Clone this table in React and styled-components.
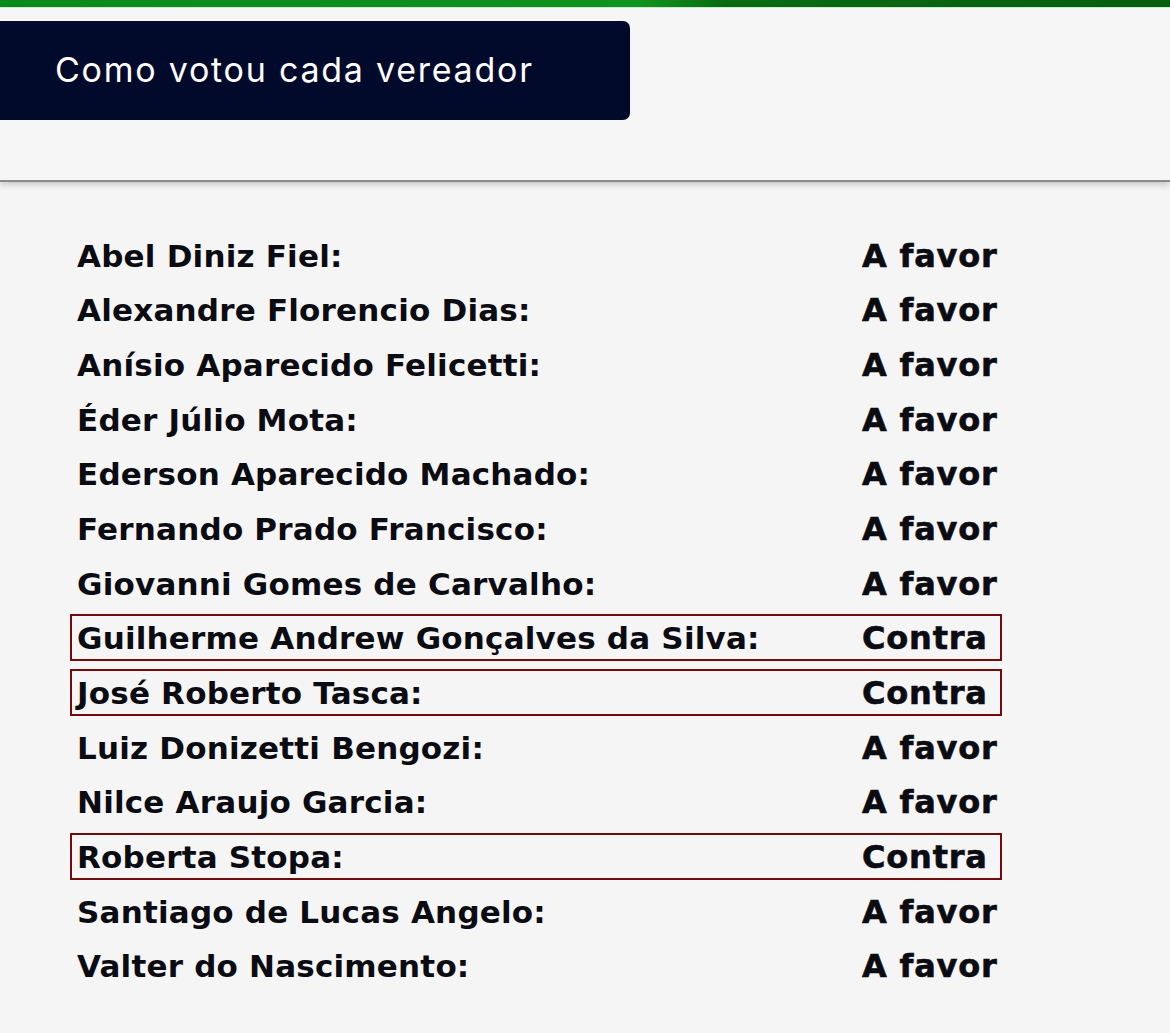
import React from "react";
import styled, { createGlobalStyle } from "styled-components";

const Global = createGlobalStyle`
  html, body { margin: 0; padding: 0; background: #f5f5f5; }
  body { font-family: "Inter", "Liberation Sans", sans-serif; }
`;

const Page = styled.div`
  width: 1170px;
  min-height: 1033px;
  background: #f5f5f5;
  overflow: hidden;
`;

const TopBar = styled.div`
  height: 7px;
  background: linear-gradient(to right, #0b8a1c 0%, #12921f 55%, #0a6a12 62%, #075e10 100%);
  border-bottom: 1px solid #c9f5d2;
`;

const Header = styled.header`
  height: 174px;
  box-sizing: border-box;
  padding-top: 13px;
  background: #f6f6f6;
  border-bottom: 2px solid #8a8a8a;
  box-shadow: 0 3px 6px rgba(0, 0, 0, 0.18);
`;

const TitleBox = styled.div`
  width: 630px;
  height: 99px;
  box-sizing: border-box;
  background: #020a2c;
  border-radius: 0 7px 7px 0;
  display: flex;
  align-items: center;
  padding-left: 55px;
  padding-bottom: 2px;
  color: #ffffff;
  font-family: "Inter", sans-serif;
  font-size: 34px;
  font-weight: 400;
  letter-spacing: 1.75px;
`;

const List = styled.div`
  display: flex;
  flex-direction: column;
  gap: 7.7px;
  padding: 49px 0 0 70px;
`;

const Row = styled.div`
  width: 932px;
  height: 47px;
  box-sizing: border-box;
  display: grid;
  grid-template-columns: 785px auto;
  align-items: center;
  padding-left: 5px;
  border: 2px solid ${(p) => (p.$highlight ? "#720c0c" : "transparent")};
`;

const Name = styled.span`
  font-family: "DejaVu Sans", sans-serif;
  font-weight: 700;
  font-size: 31px;
  letter-spacing: 0.2px;
  color: #0b0b12;
  white-space: nowrap;
  padding-top: 2px;
`;

const Vote = styled.span`
  font-family: "DejaVu Sans", sans-serif;
  font-weight: 700;
  font-size: 32px;
  letter-spacing: 0.8px;
  -webkit-text-stroke: 0.6px #0b0b12;
  color: #0b0b12;
  white-space: nowrap;
  padding-top: 2px;
`;

const votes = [
  ["Abel Diniz Fiel:", "A favor"],
  ["Alexandre Florencio Dias:", "A favor"],
  ["Anísio Aparecido Felicetti:", "A favor"],
  ["Éder Júlio Mota:", "A favor"],
  ["Ederson Aparecido Machado:", "A favor"],
  ["Fernando Prado Francisco:", "A favor"],
  ["Giovanni Gomes de Carvalho:", "A favor"],
  ["Guilherme Andrew Gonçalves da Silva:", "Contra"],
  ["José Roberto Tasca:", "Contra"],
  ["Luiz Donizetti Bengozi:", "A favor"],
  ["Nilce Araujo Garcia:", "A favor"],
  ["Roberta Stopa:", "Contra"],
  ["Santiago de Lucas Angelo:", "A favor"],
  ["Valter do Nascimento:", "A favor"],
];

export default function App() {
  return (
    <Page>
      <Global />
      <TopBar />
      <Header>
        <TitleBox>Como votou cada vereador</TitleBox>
      </Header>
      <List>
        {votes.map(([name, vote]) => (
          <Row key={name} $highlight={vote === "Contra"}>
            <Name>{name}</Name>
            <Vote>{vote}</Vote>
          </Row>
        ))}
      </List>
    </Page>
  );
}
